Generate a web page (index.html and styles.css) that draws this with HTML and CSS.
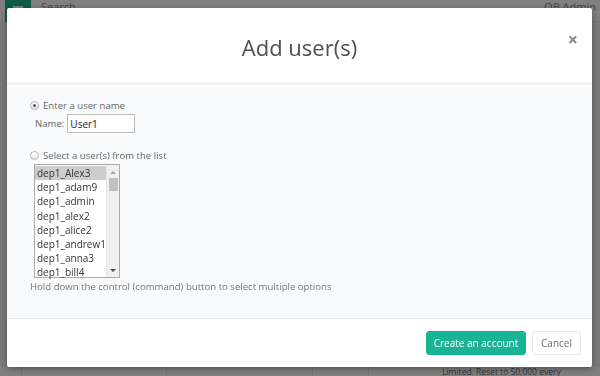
FILE: index.html
```html
<!DOCTYPE html>
<html>
  <head>
    <meta charset="utf-8">
    <title>Add user(s)</title>
    <link rel="stylesheet" href="styles.css">
  </head>
  <body>
    <div class="page">
      <div class="nav">
        <a href="javascript:;" class="menu-btn">
          <span></span><span></span><span></span>
        </a>
        <span class="search">Search</span>
        <span class="who">QB Admin</span>
      </div>
      <div class="content"></div>
      <div class="table-row">
        <div class="cell c1"></div>
        <div class="cell c2"></div>
        <div class="cell c3"></div>
        <div class="cell c4"></div>
        <div class="cell c5">Limited. Reset to 50,000 every</div>
      </div>
    </div>

    <div class="backdrop"></div>

    <div class="modal">
      <div class="modal-header">
        <h4 class="modal-title">Add user(s)</h4>
        <a href="javascript:;" class="close">&times;</a>
      </div>
      <div class="modal-body">
        <label class="opt">
          <input type="radio" name="mode" checked> Enter a user name
        </label>
        <div class="name-row">
          <span>Name:</span>
          <input type="text" class="name-input" value="User1">
        </div>

        <label class="opt second">
          <input type="radio" name="mode"> Select a user(s) from the list
        </label>
        <div class="list">
          <ul>
            <li class="sel">dep1_Alex3</li>
            <li>dep1_adam9</li>
            <li>dep1_admin</li>
            <li>dep1_alex2</li>
            <li>dep1_alice2</li>
            <li>dep1_andrew1</li>
            <li>dep1_anna3</li>
            <li>dep1_bill4</li>
          </ul>
          <div class="scroll">
            <span class="arr up"></span>
            <span class="thumb"></span>
            <span class="track"></span>
            <span class="arr down"></span>
          </div>
        </div>
        <p class="hint">Hold down the control (command) button to select multiple options</p>
      </div>
      <div class="modal-footer">
        <a href="javascript:;" class="btn btn-primary">Create an account</a>
        <a href="javascript:;" class="btn btn-white">Cancel</a>
      </div>
    </div>
  </body>
</html>
```

FILE: styles.css
```css
*{ margin:0; padding:0; list-style:none; box-sizing:border-box; }
a{ text-decoration:none; }
body{ font-family:"Open Sans","Liberation Sans",sans-serif; color:#676a6c; background:#f3f3f4; }

/* page behind the dialog */
.page{ height:100vh; display:flex; flex-direction:column; }
.nav{ height:22px; background:#fff; border-bottom:1px solid #e7eaec; display:flex; align-items:center; }
.menu-btn{ width:26px; height:22px; margin-left:5px; background:#1ab394; display:flex;
  flex-direction:column; justify-content:center; align-items:center; gap:2px; }
.menu-btn span{ width:10px; height:2px; background:#fff; }
.search{ margin-left:10px; font-size:11px; color:#888; margin-top:-8px; }
.who{ margin-left:auto; margin-right:4px; font-size:11px; color:#888; margin-top:-8px; }
.content{ flex:1; }
.table-row{ height:11px; display:flex; background:#fff; border-top:1px solid #e7eaec; }
.cell{ border-left:1px solid #e7eaec; font-size:8.5px; line-height:9px; color:#676a6c; padding:1px 0 0 8px; white-space:nowrap; overflow:hidden; }
.c1{ width:21px; border-left:none; }
.c2{ width:145px; }
.c3{ width:146px; }
.c4{ width:56px; }
.c5{ flex:1; padding-left:73px; }

.backdrop{ position:fixed; left:0; top:0; right:0; bottom:0; background:rgba(0,0,0,.5); }

/* dialog */
.modal{ position:fixed; left:7px; top:8px; width:585px; height:359px; background:#fff;
  border-radius:2px; box-shadow:0 2px 6px rgba(0,0,0,.35); display:flex; flex-direction:column; }
.modal-header{ height:76px; border-bottom:1px solid #e7eaec; display:flex;
  align-items:center; justify-content:center; position:relative; }
.modal-title{ font-size:22px; font-weight:normal; color:#505050; margin-top:2px; }
.close{ position:absolute; right:14px; top:21px; font-size:18px; font-weight:bold; color:#888; line-height:20px; }

.modal-body{ flex:1; background:#f8fafb; padding:15px 23px 0; font-size:9.6px; }
.opt{ display:flex; align-items:center; gap:4px; color:#666; line-height:14px; }
.opt input{ appearance:none; -webkit-appearance:none; width:9px; height:9px; border-radius:50%;
  border:1px solid #b5b5b5; background:linear-gradient(#fff,#e8e8e8); position:relative; margin-top:-2px; }
.opt input:checked::after{ content:""; position:absolute; left:2px; top:2px; width:3px; height:3px;
  border-radius:50%; background:#555; }
.name-row{ display:flex; align-items:center; gap:3px; margin:1px 0 0 5px; color:#666; }
.name-input{ width:68px; height:19px; border:1px solid #bbb; padding:0 2px; font:inherit; font-size:10px; color:#222; background:#fff; }
.opt.second{ margin-top:16px; }
.list{ width:86px; height:114px; margin:1px 0 0 4px; border:1px solid #aaa; background:#fff; display:flex; }
.list ul{ flex:1; padding-top:1px; }
.list li{ height:14.2px; line-height:14px; padding-left:2px; color:#333; white-space:nowrap; font-size:10px; }
.list li.sel{ background:#cdcdcd; }
.scroll{ width:13px; background:#f0f0f0; border-left:1px solid #e6e6e6; display:flex; flex-direction:column; align-items:center; }
.arr{ width:0; height:0; border-left:3px solid transparent; border-right:3px solid transparent; margin:6px 0 4px; }
.arr.up{ border-bottom:3px solid #a3a3a3; }
.arr.down{ border-top:3px solid #505050; margin:4px 0 5px; }
.thumb{ width:9px; height:13px; background:#c1c1c1; }
.track{ flex:1; }
.hint{ margin-top:2px; color:#777; line-height:14px; }

.modal-footer{ height:49px; border-top:1px solid #e7eaec; display:flex; align-items:center;
  justify-content:flex-end; gap:6px; padding:0 11px 0 0; }
.btn{ height:24px; border-radius:3px; font-size:10px; display:flex; align-items:center;
  justify-content:center; border:1px solid transparent; white-space:nowrap; }
.btn-primary{ background:#1ab394; border-color:#1ab394; color:#fff; width:100px; }
.btn-white{ background:#fff; border-color:#e7eaec; color:#676a6c; width:49px; }
```
